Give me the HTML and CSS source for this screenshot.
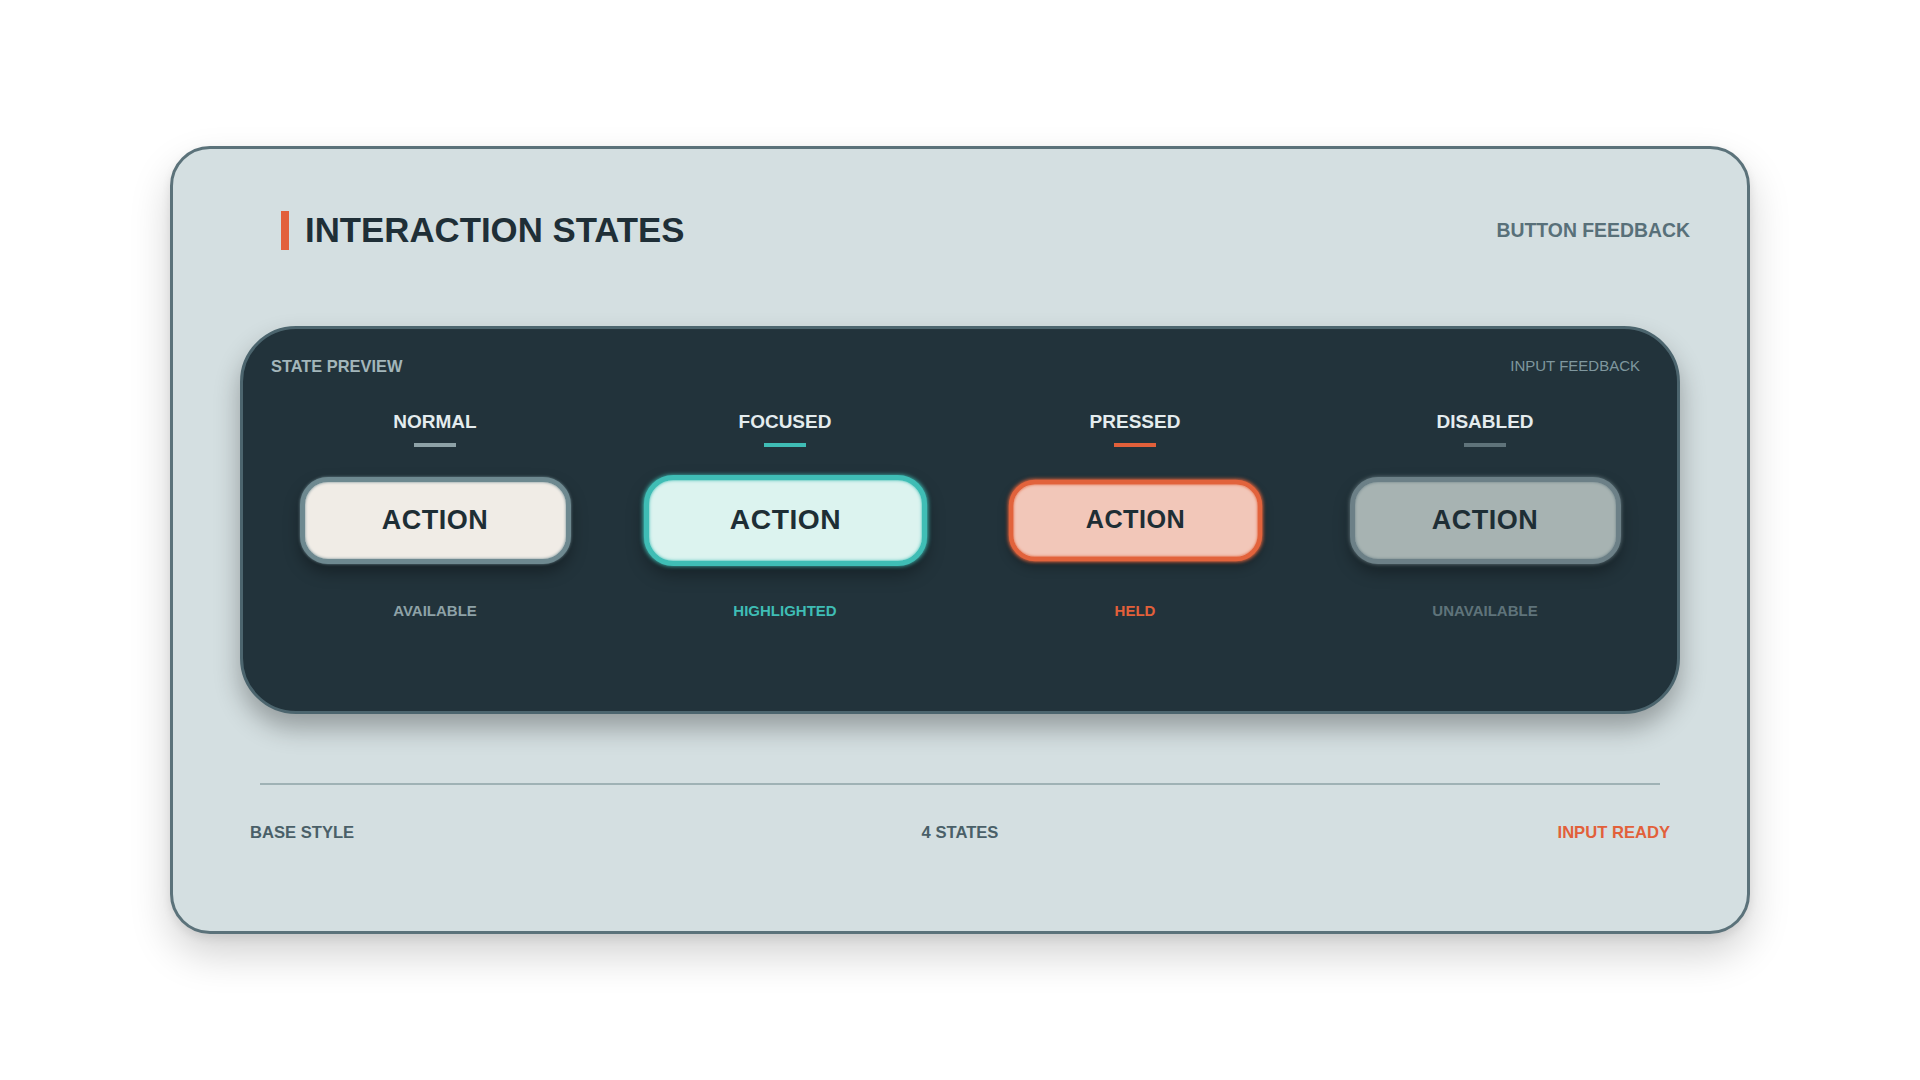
FILE: index.html
```html
<!DOCTYPE html>
<html lang="en">
<head>
    <meta charset="UTF-8">
    <meta name="viewport" content="width=device-width, initial-scale=1.0">
    <title>Interaction States</title>
    <link rel="stylesheet" href="styles.css">
</head>
<body>
    <div class="card">
        <div class="header">
            <h1 class="title"><span class="title-bar"></span>INTERACTION STATES</h1>
            <span class="header-note">BUTTON FEEDBACK</span>
        </div>

        <div class="preview">
            <div class="preview-top">
                <span class="preview-label">STATE PREVIEW</span>
                <span class="preview-note">INPUT FEEDBACK</span>
            </div>

            <div class="states">
                <div class="state normal">
                    <span class="state-name">NORMAL</span>
                    <span class="state-line"></span>
                    <button class="action">ACTION</button>
                    <span class="state-desc">AVAILABLE</span>
                </div>
                <div class="state focused">
                    <span class="state-name">FOCUSED</span>
                    <span class="state-line"></span>
                    <button class="action">ACTION</button>
                    <span class="state-desc">HIGHLIGHTED</span>
                </div>
                <div class="state pressed">
                    <span class="state-name">PRESSED</span>
                    <span class="state-line"></span>
                    <button class="action">ACTION</button>
                    <span class="state-desc">HELD</span>
                </div>
                <div class="state disabled">
                    <span class="state-name">DISABLED</span>
                    <span class="state-line"></span>
                    <button class="action" disabled>ACTION</button>
                    <span class="state-desc">UNAVAILABLE</span>
                </div>
            </div>
        </div>

        <div class="divider"></div>

        <div class="footer">
            <span class="footer-left">BASE STYLE</span>
            <span class="footer-mid">4 STATES</span>
            <span class="footer-right">INPUT READY</span>
        </div>
    </div>
</body>
</html>
```

FILE: styles.css
```css
* {
    box-sizing: border-box;
}
body {
    margin: 0;
    min-height: 100vh;
    display: flex;
    align-items: center;
    justify-content: center;
    background: #ffffff;
    font-family: "Liberation Sans", Arial, sans-serif;
}

/* outer card */
.card {
    width: 1580px;
    height: 788px;
    background: #d4dfe1;
    border: 3px solid #5b727a;
    border-radius: 40px;
    padding: 61px 57px 0 57px;
    box-shadow: 0 20px 40px rgba(0, 0, 0, 0.18), 0 4px 10px rgba(0, 0, 0, 0.08);
    display: flex;
    flex-direction: column;
}

.header {
    display: flex;
    align-items: center;
    justify-content: space-between;
    height: 40px;
    padding-left: 51px;
}
.title {
    display: flex;
    align-items: center;
    margin: 0;
    font-size: 34.8px;
    line-height: 1;
    font-weight: bold;
    color: #1f2f37;
}
.title-bar {
    width: 8px;
    height: 39px;
    background: #e2603a;
    margin-right: 16px;
}
.header-note {
    font-size: 19.4px;
    line-height: 1;
    font-weight: bold;
    color: #587079;
    padding-top: 2px;
}

/* dark preview panel */
.preview {
    margin: 76px 10px 0;
    height: 388px;
    background: #22333b;
    border: 3px solid #4c656e;
    border-radius: 56px;
    box-shadow: 0 14px 26px rgba(0, 0, 0, 0.3);
    padding-top: 29px;
}
.preview-top {
    display: flex;
    justify-content: space-between;
    padding: 0 37px 0 28px;
    line-height: 1;
}
.preview-label {
    font-size: 16.4px;
    font-weight: bold;
    color: #a3b6ba;
}
.preview-note {
    font-size: 15px;
    color: #7f979e;
}

.states {
    display: grid;
    grid-template-columns: repeat(4, 350px);
    justify-content: center;
    margin-top: 38px;
}
.state {
    display: flex;
    flex-direction: column;
    align-items: center;
}
.state-name {
    font-size: 19px;
    line-height: 1;
    font-weight: bold;
    color: #e4ecee;
}
.state-line {
    width: 42px;
    height: 4px;
    margin-top: 12px;
    background: #8ea2a7;
}
.state-desc {
    margin-top: 39px;
    font-size: 15px;
    line-height: 1;
    font-weight: bold;
    color: #8ea2a7;
}

.action {
    margin-top: 30px;
    width: 271px;
    height: 87px;
    border-radius: 28px;
    border: 5px solid #6e8990;
    background: #f0ece6;
    font-family: "Liberation Sans", Arial, sans-serif;
    font-size: 27px;
    font-weight: bold;
    letter-spacing: 0.5px;
    color: #1e2e35;
    padding: 0;
    box-shadow: 0 0 3px #6e8990, inset 0 0 3px #6e8990, 0 8px 16px rgba(0, 0, 0, 0.35);
}

.focused .state-line,
.focused .action {
    background: #3fbdb5;
}
.focused .state-desc {
    color: #3fbdb5;
}
.focused .action {
    background: #dcf3ef;
    border-color: #3fbdb5;
    transform: scale(1.045);
    box-shadow: 0 0 4px #3fbdb5, inset 0 0 3px #3fbdb5, 0 8px 16px rgba(0, 0, 0, 0.35);
}

.pressed .state-line {
    background: #e2603a;
}
.pressed .state-desc {
    color: #e2603a;
}
.pressed .action {
    background: #f2c7b9;
    border-color: #e2633c;
    transform: scale(0.935);
    box-shadow: 0 0 4px #e2633c, inset 0 0 3px #e2633c, 0 6px 12px rgba(0, 0, 0, 0.3);
}

.disabled .state-line {
    background: #5f737a;
}
.disabled .state-desc {
    color: #5f737a;
}
.disabled .action {
    background: #a7b3b2;
    border-color: #6c8087;
    color: #1e2e35;
    box-shadow: 0 0 4px #6c8087, inset 0 0 3px #6c8087, 0 8px 16px rgba(0, 0, 0, 0.35);
}

/* footer */
.divider {
    margin: 69px 30px 0;
    height: 2px;
    background: #9fb2b5;
}
.footer {
    display: flex;
    justify-content: space-between;
    margin: 40px 20px 0;
    font-size: 16.6px;
    line-height: 1;
    font-weight: bold;
}
.footer-left,
.footer-mid {
    color: #4a5f68;
}
.footer-left,
.footer-right {
    width: 200px;
}
.footer-right {
    text-align: right;
    color: #e2603a;
}
```
